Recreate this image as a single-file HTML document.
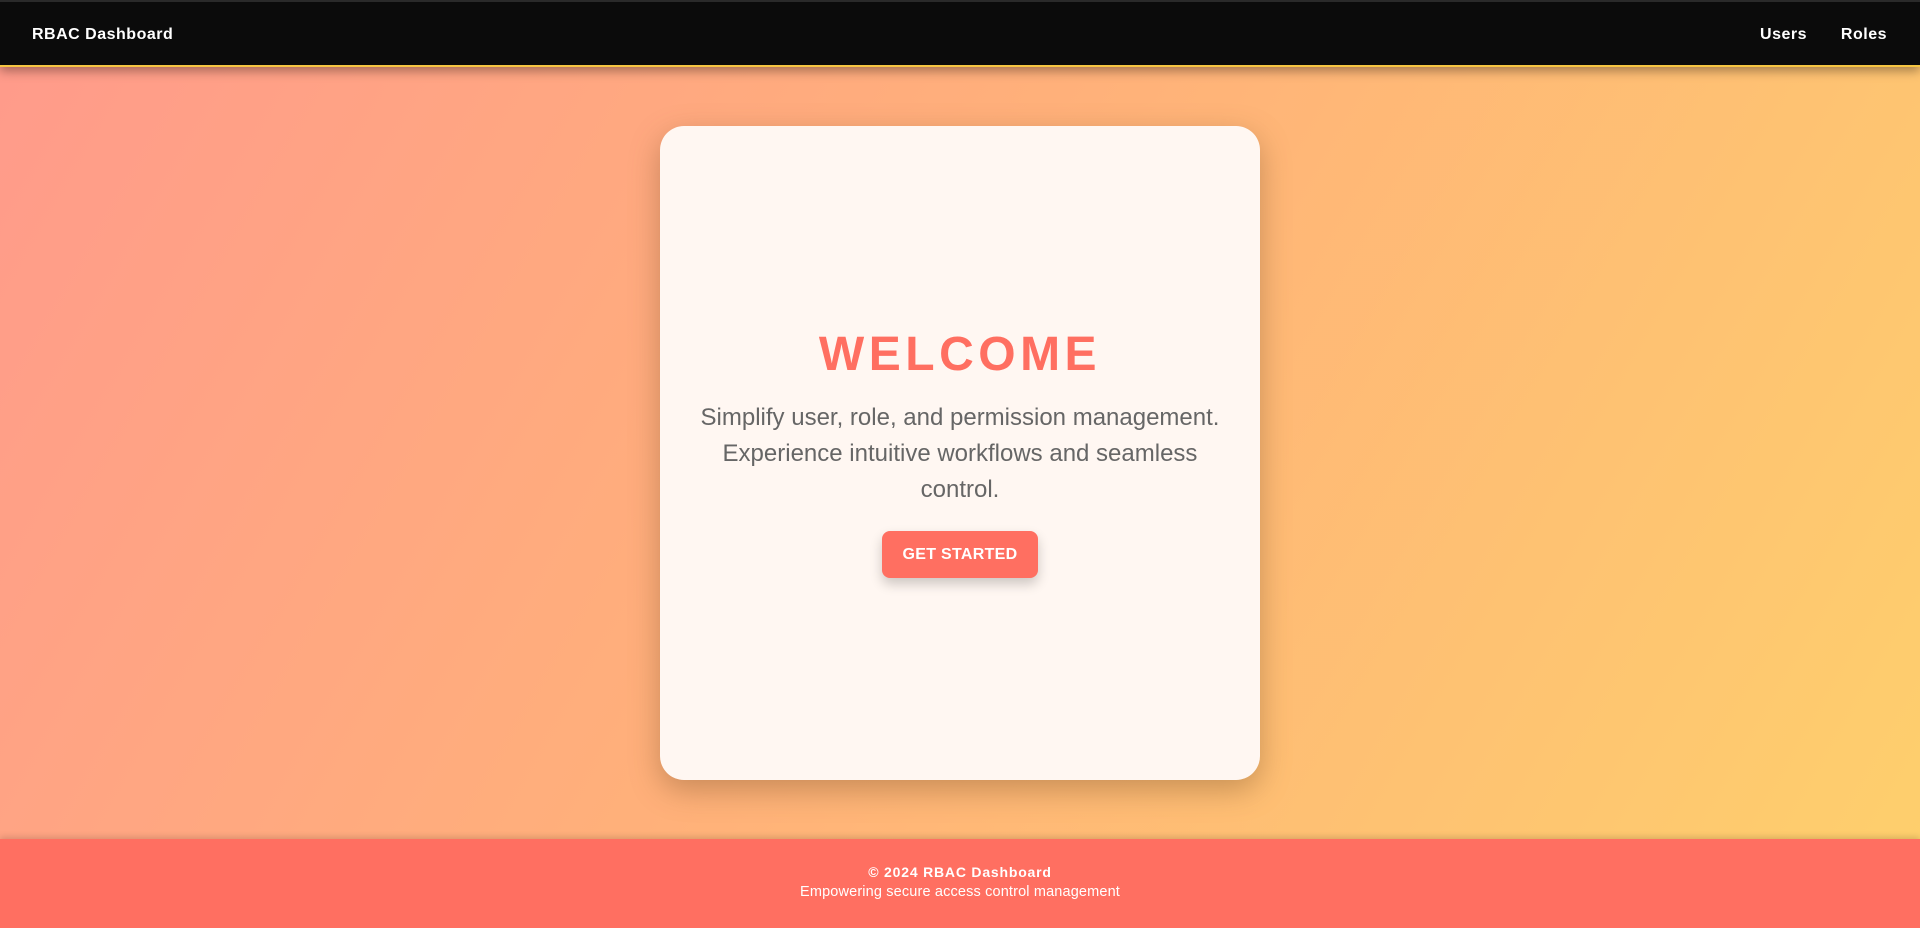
<!DOCTYPE html>
<html><head><meta charset="utf-8"><style>
*{margin:0;padding:0;box-sizing:border-box}
html,body{width:1920px;height:928px;overflow:hidden}
body{font-family:"Liberation Sans",Arial,sans-serif;background:linear-gradient(120deg,#ff9a8b 0%,#ffb07a 45%,#fed06c 100%);position:relative}
.nav{position:absolute;top:0;left:0;width:1920px;height:67px;background:#0b0b0b;border-top:2px solid #2a2a2a;border-bottom:2px solid #f5c542;box-shadow:0 4px 10px rgba(0,0,0,.35);color:#fff;font-weight:bold;font-size:16px;letter-spacing:.5px}
.nav .t{position:absolute;left:32px;top:24px}
.nav .u{position:absolute;right:113px;top:24px}
.nav .r{position:absolute;right:33px;top:24px}
.card{position:absolute;left:660px;top:126px;width:600px;height:654px;background:#fff7f2;border-radius:24px;box-shadow:0 10px 30px rgba(120,80,40,.4)}
h1{position:absolute;top:325px;left:660px;width:600px;text-align:center;font-size:48px;letter-spacing:4.5px;color:#ff6f61;font-weight:bold;line-height:60px}
.p{position:absolute;top:400px;left:660px;width:600px;text-align:center;font-size:24px;line-height:36px;color:#666}
.btn{position:absolute;left:882px;top:531px;width:156px;height:47px;background:#ff6f61;border-radius:8px;color:#fff;font-weight:bold;font-size:16px;line-height:47px;text-align:center;box-shadow:0 6px 12px rgba(0,0,0,.2);letter-spacing:.3px}
.foot{position:absolute;left:0;top:839px;width:1920px;height:89px;background:#ff6f61;color:#fff;text-align:center;box-shadow:0 -2px 6px rgba(0,0,0,.15)}
.foot .a{position:absolute;top:25px;width:100%;font-weight:bold;font-size:14px;letter-spacing:.8px}
.foot .b{position:absolute;top:45px;width:100%;font-size:14.5px;letter-spacing:.15px}
</style></head><body>
<div class="nav"><span class="t">RBAC Dashboard</span><span class="u">Users</span><span class="r">Roles</span></div>
<div class="card"></div>
<h1>WELCOME</h1>
<div class="p">Simplify user, role, and permission management.<br>Experience intuitive workflows and seamless<br>control.</div>
<div class="btn">GET STARTED</div>
<div class="foot"><div class="a">© 2024 RBAC Dashboard</div><div class="b">Empowering secure access control management</div></div>
</body></html>
